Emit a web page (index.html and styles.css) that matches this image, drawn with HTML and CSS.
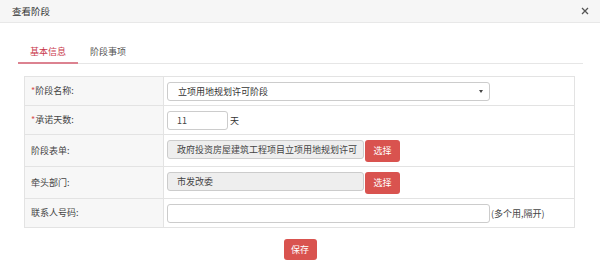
FILE: index.html
```html
<!DOCTYPE html>
<html lang="zh">
<head>
  <meta charset="UTF-8">
  <title>查看阶段</title>
  <link rel="stylesheet" href="styles.css">
</head>
<body>
  <div class="dialog-head">
    <span class="dialog-title">查看阶段</span>
    <svg class="close" width="8" height="8" viewBox="0 0 8 8"><path d="M1 1L7 7M7 1L1 7" stroke="#555" stroke-width="1.3"/></svg>
  </div>

  <div class="tabs">
    <a class="tab active" href="#">基本信息</a>
    <a class="tab" href="#">阶段事项</a>
  </div>

  <table class="form-table">
    <tr>
      <td class="label"><span class="req">*</span>阶段名称:</td>
      <td><div class="select">立项用地规划许可阶段</div></td>
    </tr>
    <tr>
      <td class="label"><span class="req">*</span>承诺天数:</td>
      <td><div class="field"><div class="input days">11</div><span class="unit">天</span></div></td>
    </tr>
    <tr class="tall">
      <td class="label">阶段表单:</td>
      <td><div class="field"><div class="input readonly">政府投资房屋建筑工程项目立项用地规划许可</div><button class="btn">选择</button></div></td>
    </tr>
    <tr class="tall">
      <td class="label">牵头部门:</td>
      <td><div class="field"><div class="input readonly">市发改委</div><button class="btn">选择</button></div></td>
    </tr>
    <tr>
      <td class="label">联系人号码:</td>
      <td><div class="field"><div class="input phone"></div><span class="hint">(多个用,隔开)</span></div></td>
    </tr>
  </table>

  <div class="footer">
    <button class="btn save">保存</button>
  </div>
</body>
</html>
```

FILE: styles.css
```css
body {
  margin: 0;
  background: #fff;
  font-family: "Microsoft YaHei", "Noto Sans CJK SC", sans-serif;
  font-size: 9px;
  color: #333;
}
.dialog-head {
  height: 22px;
  background: #f6f6f6;
  border-bottom: 1px solid #e8e8e8;
  display: flex;
  align-items: center;
  justify-content: space-between;
  padding: 0 11px 0 12px;
}
.dialog-title {
  font-size: 9.5px;
  color: #333;
}
.close {
  display: block;
}
.tabs {
  display: flex;
  margin: 17px 17px 0 18px;
  border-bottom: 1px solid #e6e6e6;
}
.tab {
  display: block;
  height: 20px;
  line-height: 20px;
  padding: 2px 12px 0;
  color: #555;
  text-decoration: none;
  border-bottom: 2px solid transparent;
  margin-bottom: -1px;
}
.tab.active {
  color: #c9384a;
  border-bottom-color: #dc8290;
}
.form-table {
  border-collapse: collapse;
  margin: 12px 0 0 24px;
  width: 551px;
}
.form-table td {
  border: 1px solid #e3e3e3;
  height: 28px;
  padding: 0 3px;
  line-height: 12px;
  vertical-align: middle;
}
.form-table tr.tall td {
  height: 31px;
}
.form-table td.label {
  width: 128px;
  background: #f7f7f7;
  padding: 0 4px 0 6px;
  color: #444;
}
.req {
  color: #d9534f;
}
.select {
  position: relative;
  width: 301px;
  height: 17px;
  line-height: 17px;
  border: 1px solid #ccc;
  border-radius: 3px;
  padding-left: 10px;
  padding-right: 10px;
}
.select::after {
  content: "";
  position: absolute;
  right: 6px;
  top: 7px;
  border-left: 2px solid transparent;
  border-right: 2px solid transparent;
  border-top: 3px solid #444;
}
.field {
  display: flex;
  align-items: flex-start;
}
.input {
  height: 17px;
  line-height: 17px;
  border: 1px solid #ccc;
  border-radius: 3px;
  padding-left: 9px;
  white-space: nowrap;
  overflow: hidden;
  color: #444;
}
.input.days {
  width: 50px;
}
.input.readonly {
  width: 186px;
  background: #eee;
}
.input.phone {
  width: 312px;
}
.unit {
  line-height: 19px;
  margin-left: 2px;
}
.hint {
  line-height: 19px;
  margin-left: 1px;
  color: #444;
}
.btn {
  height: 22px;
  width: 35px;
  margin-left: 1px;
  padding: 0;
  border: none;
  border-radius: 3px;
  background: #d9534f;
  color: #fff;
  font-family: inherit;
  font-size: 9px;
  cursor: pointer;
}
.footer {
  text-align: center;
  margin-top: 11px;
}
.btn.save {
  width: 33px;
  height: 21px;
  margin-left: 0;
}
```
